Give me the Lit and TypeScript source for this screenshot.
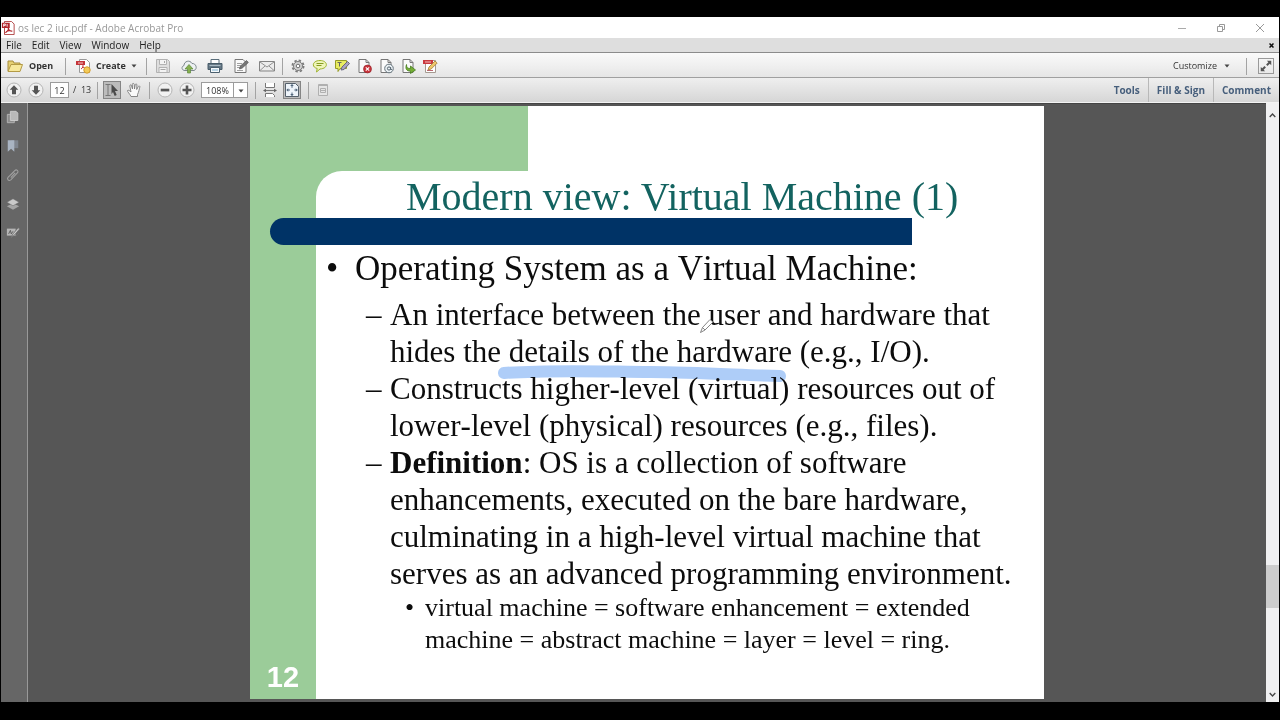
import { LitElement, html, css, svg } from "lit";
import { customElement } from "lit/decorators.js";

const page = svg`<path d="M3 1.5h7l3 3v10H3z" fill="#fbfbfb" stroke="#777"/><path d="M10 1.5v3h3" fill="none" stroke="#777"/>`;

const glyphs: Record<string, unknown> = {
  pdf: svg`<path d="M4 .5h8l3 3v12H4z" fill="#fff" stroke="#a33"/><path d="M1 2h9v6H1z" fill="#b3272d"/><path d="M3 6.500V3.500h2v1.500H3M7 3.500v3" stroke="#fff" fill="none"/><path d="M5 13.500c3-2 4-5 3.500-6.500M8 8c1 3 3 4 5 3.500M6 12c2-1 4-1 6-.5" stroke="#b3272d" fill="none" stroke-width="1.300"/>`,
  folder: svg`<path d="M1 13V3h5l1 2h6v2" fill="#e5cf72" stroke="#a68d3c"/><path d="M1 13.500 4 6.500h11.500L13 13.500z" fill="#f7e89b" stroke="#b39a45"/>`,
  create: svg`<path d="M4.500 1.500h7l3 3v10h-10z" fill="#fff" stroke="#999"/><path d="M1 3h9v4H1z" fill="#c4353a"/><path d="M3 5h5" stroke="#f5c5c5"/><path d="M6 11c2-1 2-3 2-4M8 9l3 2" stroke="#c4353a" fill="none"/><circle cx="12" cy="12" r="3.200" fill="#f3cb58" stroke="#d39c2c"/>`,
  save: svg`<path d="M1.500 1.500h11l2 2v11h-13z" fill="#dedede" stroke="#b2b2b2"/><path d="M4.500 2v4.500h7V2M4 14V9.500h8V14" fill="#f3f3f3" stroke="#b2b2b2"/><path d="M9.500 3v2M5.500 11.500h5" stroke="#a5a5a5"/>`,
  cloud: svg`<path d="M4 12.500C.5 12.500 0 8.500 3 7.500 3 3 9 1.500 11 5.500c4-.5 6 5.500 2 7z" fill="#edf1f3" stroke="#7d878d"/><path d="M8 6.500 12 11H9.500v4h-3v-4H4z" fill="#86b050" stroke="#5f8a3c" stroke-width=".7"/>`,
  print: svg`<path d="M4 1.500h8V6H4z" fill="#fff" stroke="#596d7a"/><path d="M1 5.500h14v6H1z" fill="#667986" stroke="#475b68"/><path d="M2.500 7.500h11" stroke="#a9bac5"/><path d="M3.500 9.500h9v5h-9z" fill="#f5f9fb" stroke="#4c6170"/><path d="M5 12h6" stroke="#7dafd0"/>`,
  edit: svg`<path d="M2 1.500h8l3 3v10H2z" fill="#fafafa" stroke="#777"/><path d="M4 5.500h5M4 7.500h4M4 9.500h3M4 12.500h6" stroke="#a0a0a0"/><path d="m6.500 11 1-3 6-5.500 1.800 2-6 5.500z" fill="#777" stroke="#505050" stroke-width=".7"/>`,
  mail: svg`<path d="M.5 3.500h15v9.500H.5z" fill="#ececec" stroke="#838383"/><path d="m1 4 7 5 7-5M1 12.500 6 8M15 12.500 10 8" fill="none" stroke="#929292"/>`,
  gear: svg`<circle cx="8" cy="8" r="5.600" fill="none" stroke="#7b7b7b" stroke-width="1.800" stroke-dasharray="2.400 2"/><circle cx="8" cy="8" r="4.500" fill="#d3d3d3" stroke="#7b7b7b"/><circle cx="8" cy="8" r="1.800" fill="#fff" stroke="#6d6d6d"/>`,
  bubble: svg`<path d="M8 2.500c8 0 9 8 0 8.500L4.500 14l.7-3.500C-1 9 .5 2.500 8 2.500z" fill="#eff5b9" stroke="#9eb32d"/><path d="M4.500 5.500h7M4.500 7.500h5" stroke="#879c22"/>`,
  note: svg`<path d="M1.500 2.500h11v8H6l-2 3v-3H1.500z" fill="#e9ec62" stroke="#969b26"/><path d="M3.500 4.500h4M5.500 4.500v4" stroke="#666"/><path d="m7 12 1-3 5.500-5.500 2 2-5.500 6z" fill="#aaa3c2" stroke="#69667d"/>`,
  remove: svg`${page}<circle cx="11.500" cy="11" r="4" fill="#c9343b" stroke="#8e1f27" stroke-width=".6"/><path d="m9.800 9.300 3.400 3.400m0-3.400-3.400 3.400" stroke="#fff" stroke-width="1.100"/>`,
  at: svg`${page}<circle cx="11" cy="10.500" r="4.300" fill="#eaf0f3" stroke="#66747d"/><circle cx="11" cy="10.500" r="1.600" fill="none" stroke="#566570"/><path d="M12.600 9v2.500h1.500" fill="none" stroke="#566570" stroke-width=".9"/>`,
  send: svg`${page}<path d="M6.500 6.500c0 3 1 4 4 4V8l5 4-5 3.500v-2.300C6.500 13 5 11 6.500 6.500z" fill="#75ae36" stroke="#477c21" stroke-width=".8"/>`,
  sign: svg`<path d="M3.500 2.500h10v12h-10z" fill="#fff" stroke="#a59a91"/><path d="M1 2h10v4H1z" fill="#c9383d"/><path d="M3 4h6" stroke="#f2bcbc"/><path d="M5 12.500h6" stroke="#bb6770"/><path d="m6 12 1-3 6-6 2.200 2-6 6z" fill="#eec76b" stroke="#a17d39" stroke-width=".8"/>`,
  up: svg`<circle cx="8" cy="8" r="7" fill="#f1f1f1" stroke="#b5b5b5"/><path d="m8 3.300 4.300 4.500H10v4.400H6V7.800H3.700z" fill="#555"/>`,
  down: svg`<circle cx="8" cy="8" r="7" fill="#f1f1f1" stroke="#b5b5b5"/><path d="m8 12.700 4.300-4.500H10V3.800H6v4.400H3.700z" fill="#555"/>`,
  minus: svg`<circle cx="8" cy="8" r="7" fill="#f1f1f1" stroke="#b5b5b5"/><path d="M3.700 6.700h8.600v2.700H3.700z" fill="#555"/>`,
  plus: svg`<circle cx="8" cy="8" r="7" fill="#f1f1f1" stroke="#b5b5b5"/><path d="M3.500 6.700h3.200V3.500h2.600v3.200h3.200v2.600H9.300v3.200H6.700V9.300H3.500z" fill="#555"/>`,
  select: svg`<path d="M1.500 2.500h5M4 2.500v11M1.500 13.500h5" stroke="#777" fill="none"/><path d="m7.500 2 6.500 7h-3l1.700 4-2 .9L9 10l-1.500 2z" fill="#4b4b4b"/>`,
  hand: svg`<path d="M5 14.500C4 12 1 9.500 1.500 8.500S4 9 5 10L3.800 4c0-1.500 1.500-1.500 1.800 0L6.500 7 6.300 2.500c0-1.500 1.700-1.500 1.900 0L8.500 7l.7-4.300c.3-1.200 1.700-1 1.700.3L10.700 7.500l1.600-3c.6-1 1.800-.5 1.500.6-.6 2-1 5-2.300 7.400v2z" fill="#fafafa" stroke="#7c7c7c" stroke-width=".9"/>`,
  fitWidth: svg`<path d="M3.500 1v4.500h9V1M3.500 15v-3.500h7l2 2V15" fill="#fff" stroke="#777"/><path d="M3 8.500h10" stroke="#777"/><path d="M4 6.800 1 8.500l3 1.700zM12 6.800l3 1.700-3 1.700z" fill="#666"/>`,
  fitPage: svg`<path d="M1.500 1.500h10l3 3v10h-13z" fill="#eef4fa" stroke="#56616c"/><path d="M8 2.800v3M8 10.500v3M3 8h3M10.300 8h3" stroke="#52677c"/><path d="m8 2 1.800 2H6.200zM8 14l1.800-2H6.200zM2.300 8l2-1.800v3.600zM13.700 8l-2-1.800v3.600z" fill="#52677c"/>`,
  form: svg`<path d="M3.500 2.500h9v11h-9z" fill="#e6e6e6" stroke="#b0b0b0"/><path d="M3 3.500h10M5.500 6.500h5v4h-5zM6 8.500h4" fill="none" stroke="#b0b0b0"/>`,
  expand: svg`<path d="M9 2h5v5l-1.700-1.700-2.600 2.600-1.600-1.600 2.600-2.600zM7 14H2V9l1.700 1.700 2.600-2.600 1.600 1.600-2.600 2.600z" fill="#555"/>`,
  pages: svg`<path d="M1.500 5h8v9.500h-8z" fill="#8d8d8d" stroke="#b8b8b8"/><path d="M5 1.500h6.500l2 2v8.500H5z" fill="#b9b9b9" stroke="#cfcfcf"/>`,
  bookmark: svg`<path d="M6 1.500h8v9H6z" fill="#7f858e"/><path d="M2 1.500h7.500v13L5.800 11 2 14.500z" fill="#a9b4c2"/>`,
  clip: svg`<path d="m4 9 6-6c2-2 5 .5 3 2.500l-7.500 8c-2.500 2-5-.8-3-3L9 4.500M5.500 11l5-5.500" fill="none" stroke="#a0a0a0" stroke-width="1.200"/>`,
  layers: svg`<path d="m8 7 7 3.500L8 14.500 1 10.500z" fill="#a5a5a5"/><path d="m8 2 7 4-7 4-7-4z" fill="#cacaca" stroke="#686868" stroke-width=".6"/>`,
  signature: svg`<path d="M1 3h10v8H1z" fill="#b5b5b5"/><path d="m3 9 2-4 1 4 2-3" stroke="#555" fill="none"/><path d="m6 13 2-4 6-7 1.500 1.500-6 7zM11 12l4-4" fill="#c9c9c9" stroke="#707070"/>`,
};

const icon = (name: string) =>
  html`<svg class="icon" viewBox="0 0 16 16" aria-hidden="true">${glyphs[name]}</svg>`;

const tool = (name: string, label: string, kind = "") =>
  html`<button class="tool ${kind}" aria-label=${label} title=${label}>${icon(name)}</button>`;

const caret = html`<svg class="caret" viewBox="0 0 6 4" aria-hidden="true"><path d="M.5.5h5L3 3.500z" fill="#444" /></svg>`;

@customElement("pdf-slide")
class PdfSlide extends LitElement {
  static styles = css`
    :host {
      display: grid;
      grid-template-columns: 66px 1fr;
      position: relative;
      width: 794px;
      min-height: 593px;
      box-sizing: border-box;
      background: #fff;
      font-family: "Liberation Serif", "Times New Roman", serif;
      color: #0c0c0c;
    }
    .side {
      display: flex;
      align-items: flex-end;
      justify-content: center;
      background: #9bcc99;
      color: #fff;
      font: bold 29px/44px "Liberation Sans", Arial, sans-serif;
    }
    .body {
      display: flex;
      flex-direction: column;
      background: #9bcc99;
    }
    .band {
      display: flex;
      justify-content: flex-end;
      height: 65px;
    }
    .blank {
      width: calc(100% - 212px);
      background: #fff;
    }
    .panel {
      flex: 1;
      border-top-left-radius: 26px;
      background: #fff;
    }
    h1 {
      margin: 0;
      padding: 5px 0 0 90px;
      font-size: 40px;
      font-weight: 400;
      line-height: 42px;
      color: #136360;
    }
    .bar {
      height: 27px;
      margin-left: -46px;
      margin-right: 132px;
      border-radius: 14px 0 0 14px;
      background: #003366;
    }
    ul {
      list-style: none;
      margin: 0;
      padding: 0;
      font-kerning: none;
    }
    li {
      display: flex;
      white-space: nowrap;
    }
    .one {
      padding: 3px 0 6px 10px;
      font-size: 35px;
      line-height: 42px;
    }
    .one .mark {
      width: 29px;
    }
    .two {
      padding-left: 50px;
      font-size: 31px;
      line-height: 37px;
    }
    .two .mark {
      width: 24px;
    }
    .three {
      padding-left: 89px;
      font-size: 26px;
      line-height: 32px;
    }
    .three .mark {
      width: 20px;
    }
    .ink {
      position: absolute;
      left: 0;
      top: 0;
      width: 100%;
      height: 100%;
      mix-blend-mode: multiply;
      pointer-events: none;
    }
    .cursor {
      position: absolute;
      left: 449px;
      top: 212px;
      width: 16px;
      height: 16px;
    }
  `;

  render() {
    return html`
      <aside class="side">12</aside>
      <section class="body">
        <div class="band"><div class="blank"></div></div>
        <div class="panel">
          <h1>Modern view: Virtual Machine (1)</h1>
          <div class="bar"></div>
          <ul>
            <li class="one"><span class="mark">•</span><span>Operating System as a Virtual Machine:</span></li>
            <li class="two"><span class="mark">–</span><span>An interface between the user and hardware that<br />hides the details of the hardware (e.g., I/O).</span></li>
            <li class="two"><span class="mark">–</span><span>Constructs higher-level (virtual) resources out of<br />lower-level (physical) resources (e.g., files).</span></li>
            <li class="two"><span class="mark">–</span><span><b>Definition</b>: OS is a collection of software<br />enhancements, executed on the bare hardware,<br />culminating in a high-level virtual machine that<br />serves as an advanced programming environment.</span></li>
            <li class="three"><span class="mark">•</span><span>virtual machine = software enhancement = extended<br />machine = abstract machine = layer = level = ring.</span></li>
          </ul>
        </div>
      </section>
      <svg class="ink" viewBox="0 0 794 593" preserveAspectRatio="xMinYMin" aria-hidden="true">
        <path d="M254 267C300 263.500 350 265.500 400 266S490 269 530 270" fill="none" stroke="#aecdf8" stroke-width="12" stroke-linecap="round" />
      </svg>
      <svg class="cursor" viewBox="0 0 16 16" aria-hidden="true">
        <path d="m1.500 14.500 2-5 7.500-8 3 2.500-8 8zM3.500 9.500 6 12" fill="#fff" stroke="#777" stroke-width=".9" />
      </svg>
    `;
  }
}

@customElement("app-root")
class AppRoot extends LitElement {
  static styles = css`
    :host {
      display: flex;
      flex-direction: column;
      box-sizing: border-box;
      min-height: 100vh;
      padding: 17px 1px 18px;
      background: #000;
      color: #333;
      font: 10px/14px "Open Sans", "Noto Sans", sans-serif;
    }
    button,
    input {
      box-sizing: border-box;
      margin: 0;
      padding: 0;
      border: 0;
      background: none;
      color: inherit;
      font: inherit;
    }
    .icon {
      display: block;
      flex: none;
      width: 16px;
      height: 16px;
    }
    .caret {
      width: 6px;
      height: 4px;
    }
    .title {
      display: flex;
      align-items: center;
      height: 21px;
      background: #fff;
      color: #989898;
    }
    .title .icon {
      width: 14px;
      height: 14px;
    }
    .name {
      flex: 1;
      padding-left: 3px;
    }
    .win {
      width: 39px;
      height: 20px;
    }
    .win svg {
      display: block;
      width: 10px;
      height: 10px;
      margin: auto;
    }
    .menu {
      display: flex;
      align-items: center;
      gap: 10px;
      height: 15px;
      padding-left: 5px;
      background: #dedede;
      border-bottom: 1px solid #8c8c8c;
      box-sizing: border-box;
      color: #222;
    }
    .close {
      margin-left: auto;
      width: 15px;
      height: 14px;
    }
    .close svg {
      display: block;
      width: 5px;
      height: 5px;
      margin: auto;
    }
    .row {
      display: flex;
      align-items: center;
      box-sizing: border-box;
      height: 25px;
      padding-top: 2px;
      background: linear-gradient(#fafafa, #e6e6e6);
      border-bottom: 1px solid #a0a0a0;
    }
    .nav {
      padding-top: 0;
      border-bottom-color: #f3f3f3;
      background: linear-gradient(#efefef, #d6d6d6);
    }
    .sep {
      width: 1px;
      height: 17px;
      background: #a3a3a3;
    }
    .labelled {
      display: flex;
      align-items: center;
      gap: 6px;
      height: 22px;
      padding: 0 6px;
      font-size: 9px;
      font-weight: 700;
    }
    .open {
      width: 64px;
    }
    .make {
      width: 80px;
      padding-left: 9px;
      gap: 5px;
    }
    .tool {
      display: grid;
      place-items: center;
      width: 22px;
      height: 18px;
    }
    .wide {
      width: 26px;
    }
    .files {
      display: flex;
      padding: 0 2px 0 3px;
    }
    .actions {
      display: flex;
      padding-left: 4px;
    }
    .pressed {
      width: 18px;
      margin: 0 2px;
      background: #bcbcbc;
      box-shadow: inset 0 0 0 1px #858585;
    }
    .customize {
      display: flex;
      align-items: center;
      gap: 7px;
      margin-left: auto;
      margin-right: 16px;
      font-size: 9px;
    }
    .boxed {
      width: 16px;
      height: 16px;
      margin: 0 5px 0 11px;
      border: 1px solid #999;
    }
    .boxed .icon {
      width: 14px;
      height: 14px;
    }
    .field {
      height: 16px;
      border: 1px solid #9c9c9c;
      background: #fff;
      font-size: 9px;
      text-align: center;
    }
    .pageno {
      width: 19px;
      margin-left: 3px;
    }
    .total {
      padding-left: 4px;
      font-size: 9px;
      white-space: pre;
    }
    .paging {
      display: flex;
      align-items: center;
      width: 96px;
      padding-left: 2px;
      box-sizing: border-box;
    }
    .paging .tool {
      flex: none;
    }
    .pointer {
      display: flex;
      width: 51px;
      padding-left: 3px;
      box-sizing: border-box;
    }
    .zoom {
      display: flex;
      align-items: center;
      width: 105px;
      padding-left: 4px;
      box-sizing: border-box;
    }
    .percent {
      width: 33px;
      margin-left: 3px;
    }
    .drop {
      width: 15px;
      margin-left: -1px;
      line-height: 8px;
    }
    .fit {
      display: flex;
      width: 52px;
      padding-left: 3px;
      box-sizing: border-box;
    }
    .form {
      padding-left: 3px;
    }
    .tabs {
      display: flex;
      margin-left: auto;
      height: 24px;
    }
    .tab {
      padding: 0 8px;
      border-left: 1px solid #b8b8b8;
      color: #475f7c;
      font-weight: 700;
    }
    .tab:first-child {
      border-left: 0;
    }
    .work {
      display: flex;
      flex: 1;
      background: #565656;
    }
    .rail {
      display: flex;
      flex-direction: column;
      align-items: center;
      gap: 11px;
      width: 27px;
      padding-top: 5px;
      padding-right: 3px;
      box-sizing: border-box;
      border-right: 1px solid #999;
      background: #666;
    }
    .rail .icon {
      width: 14px;
      height: 14px;
    }
    .canvas {
      flex: 1;
      display: flex;
      justify-content: center;
      align-items: flex-start;
      padding: 2px 0 3px;
      border-top: 1px solid #444;
    }
    .scroll {
      display: flex;
      flex-direction: column;
      align-items: center;
      width: 13px;
      padding: 4px 0 0;
      background: #f0f0f1;
    }
    .arrow {
      width: 13px;
      height: 16px;
    }
    .arrow svg {
      display: block;
      width: 7px;
      height: 5px;
      margin: auto;
    }
    .track {
      display: flex;
      flex: 1;
      flex-direction: column;
      align-self: stretch;
    }
    .before {
      flex: 442;
    }
    .thumb {
      flex: 43;
      background: #cdcdcd;
    }
    .after {
      flex: 78;
    }
  `;

  render() {
    return html`
      <header class="title">
        ${icon("pdf")}<span class="name">os lec 2 iuc.pdf - Adobe Acrobat Pro</span>
        <button class="win" aria-label="Minimize"><svg viewBox="0 0 10 10"><path d="M1 5.500h8" stroke="#aaa" /></svg></button>
        <button class="win" aria-label="Restore"><svg viewBox="0 0 10 10"><path d="M1.500 3.500h5v5h-5zM3.500 3V1.500h5v5H7" fill="none" stroke="#999" /></svg></button>
        <button class="win" aria-label="Close"><svg viewBox="0 0 10 10"><path d="m1 1 8 8m0-8L1 9" stroke="#999" /></svg></button>
      </header>
      <nav class="menu">
        ${["File", "Edit", "View", "Window", "Help"].map((m) => html`<button>${m}</button>`)}
        <button class="close" aria-label="Close document"><svg viewBox="0 0 5 5"><path d="m.5.5 4 4m0-4-4 4" stroke="#111" stroke-width="1.500" /></svg></button>
      </nav>
      <div class="row">
        <button class="labelled open">${icon("folder")}Open</button>
        <span class="sep"></span>
        <button class="labelled make">${icon("create")}Create ${caret}</button>
        <span class="sep"></span>
        <div class="files">
          ${tool("save", "Save", "wide")}${tool("cloud", "Upload", "wide")}${tool("print", "Print", "wide")}${tool("edit", "Edit", "wide")}${tool("mail", "Email", "wide")}
        </div>
        <span class="sep"></span>
        <div class="actions">
          ${tool("gear", "Settings")}${tool("bubble", "Comment")}${tool("note", "Highlight")}${tool("remove", "Delete page")}${tool("at", "Attach")}${tool("send", "Send")}${tool("sign", "Sign")}
        </div>
        <button class="customize">Customize ${caret}</button>
        <span class="sep"></span>
        <button class="tool boxed" aria-label="Read mode">${icon("expand")}</button>
      </div>
      <div class="row nav">
        <div class="paging">
          ${tool("up", "Previous page")}${tool("down", "Next page")}
          <input class="field pageno" aria-label="Page" value="12" /><span class="total">/  13</span>
        </div>
        <span class="sep"></span>
        <div class="pointer">${tool("select", "Select", "pressed")}${tool("hand", "Pan")}</div>
        <span class="sep"></span>
        <div class="zoom">
          ${tool("minus", "Zoom out")}${tool("plus", "Zoom in")}
          <input class="field percent" aria-label="Zoom" value="108%" /><button class="field drop" aria-label="Zoom levels">${caret}</button>
        </div>
        <span class="sep"></span>
        <div class="fit">${tool("fitWidth", "Fit width")}${tool("fitPage", "Fit page", "pressed")}</div>
        <span class="sep"></span>
        <div class="form">${tool("form", "Form")}</div>
        <div class="tabs">
          <button class="tab">Tools</button><button class="tab">Fill &amp; Sign</button><button class="tab">Comment</button>
        </div>
      </div>
      <main class="work">
        <nav class="rail">
          ${tool("pages", "Page thumbnails")}${tool("bookmark", "Bookmarks")}${tool("clip", "Attachments")}${tool("layers", "Layers")}${tool("signature", "Signatures")}
        </nav>
        <div class="canvas"><pdf-slide></pdf-slide></div>
        <div class="scroll">
          <button class="arrow" aria-label="Scroll up"><svg viewBox="0 0 7 5"><path d="m.7 4 2.800-3 2.800 3" fill="none" stroke="#444" stroke-width="1.300" /></svg></button>
          <div class="track"><div class="before"></div><div class="thumb"></div><div class="after"></div></div>
          <button class="arrow" aria-label="Scroll down"><svg viewBox="0 0 7 5"><path d="m.7 1 2.800 3 2.800-3" fill="none" stroke="#444" stroke-width="1.300" /></svg></button>
        </div>
      </main>
    `;
  }
}
